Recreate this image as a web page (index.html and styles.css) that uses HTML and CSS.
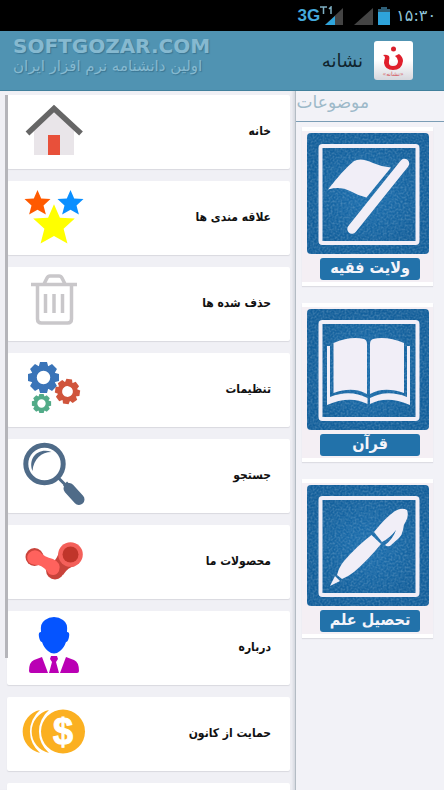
FILE: index.html
```html
<!DOCTYPE html>
<html lang="fa">
<head>
    <meta charset="UTF-8">
    <meta name="viewport" content="width=device-width, initial-scale=1.0">
    <title>نشانه</title>
    <link rel="stylesheet" href="styles.css">
</head>
<body>
    <div class="status-bar">
        <span class="network">3G</span>
        <svg class="signal" width="24" height="20" viewBox="0 0 24 20">
            <path d="M23 2v17H5z" fill="#444"/>
            <path d="M15 10v9H5z" fill="#2fa5dc"/>
            <path d="M0 1h7M3.500 1v7M9 3l2-2v7" fill="none" stroke="#7fb0c4" stroke-width="1.500"/>
        </svg>
        <svg class="signal-empty" width="19" height="20" viewBox="0 0 19 20">
            <path d="M19 2v17H0z" fill="#444"/>
        </svg>
        <svg class="battery" width="12" height="20" viewBox="0 0 12 20">
            <path d="M3 1h6v2h3v16H0V3h3z" fill="#2e5f77"/>
            <path d="M0 6h12v13H0z" fill="#2ea3da"/>
        </svg>
        <span class="clock">۱۵:۳۰</span>
    </div>

    <header class="header">
        <div class="watermark">
            <span class="watermark-name">SOFTGOZAR.COM</span>
            <span class="watermark-text" dir="rtl">اولین دانشنامه نرم افزار ایران</span>
        </div>
        <h1 class="app-title" dir="rtl">نشانه</h1>
        <svg class="app-logo" width="39" height="39" viewBox="0 0 39 39">
            <defs>
                <linearGradient id="logoBg" x1="0" y1="0" x2="0" y2="1">
                    <stop offset="0.500" stop-color="#fff"/>
                    <stop offset="1" stop-color="#d6d7dd"/>
                </linearGradient>
            </defs>
            <rect width="39" height="39" rx="3" fill="url(#logoBg)"/>
            <circle cx="19.500" cy="8" r="2.500" fill="#d91f2b"/>
            <path d="M9 14q3-1 6 1 1 2 0 5-1 5 4 5 5 0 5-5 0-3-3-5l4-2q4 3 4 7-1 9-10 9-8 0-9-7 0-3 1-5 0-2-2-3z" fill="#e01f2c"/>
            <text class="logo-text" x="19" y="35" text-anchor="middle">«نشانه»</text>
        </svg>
    </header>

    <div class="content">
        <nav class="drawer">
            <a href="#" class="menu-item">
                <svg class="menu-icon" viewBox="0 0 70 74">
                    <path d="M14 34L34 16l20 18v27H14z" fill="#e9e5e9"/>
                    <path d="M28 41h12v20H28z" fill="#e8503a"/>
                    <path d="M7.500 39.500L34 14.500l27 25" fill="none" stroke="#666" stroke-width="5.500"/>
                </svg>
                <span dir="rtl">خانه</span>
            </a>
            <a href="#" class="menu-item">
                <svg class="menu-icon" viewBox="0 0 70 74">
                    <defs>
                        <path id="star" d="M0-13L3.700-4.600 13-4 6 2.400 8.400 11.500 0 6.800-8.400 11.500-6 2.400-13-4-3.700-4.600z"/>
                    </defs>
                    <use href="#star" x="17.500" y="23" fill="#ff5a00"/>
                    <use href="#star" x="50.500" y="23" fill="#0a8fff"/>
                    <use href="#star" transform="translate(34 45) scale(1.600)" fill="#ff0"/>
                </svg>
                <span dir="rtl">علاقه مندی ها</span>
            </a>
            <a href="#" class="menu-item">
                <svg class="menu-icon" viewBox="0 0 70 74">
                    <g fill="none" stroke="#c9c7ca" stroke-width="3.500">
                        <path d="M11 18.500h46M24 18l3-6q1-2 3-2h9q2 0 3 2l3 6M17.500 19v34q0 4 4 4h26q4 0 4-4V19"/>
                        <path d="M25.500 28v19M34 28v19M42.500 28v19"/>
                    </g>
                </svg>
                <span dir="rtl">حذف شده ها</span>
            </a>
            <a href="#" class="menu-item">
                <svg class="menu-icon" viewBox="0 0 70 74">
                    <defs>
                        <path id="tooth" d="M-5-10l1.500-5.500h7L5-10z"/>
                        <g id="gear">
                            <circle r="9.500" fill="none" stroke-width="5.500"/>
                            <g stroke="none">
                                <use href="#tooth"/>
                                <use href="#tooth" transform="rotate(45)"/>
                                <use href="#tooth" transform="rotate(90)"/>
                                <use href="#tooth" transform="rotate(135)"/>
                                <use href="#tooth" transform="rotate(180)"/>
                                <use href="#tooth" transform="rotate(225)"/>
                                <use href="#tooth" transform="rotate(270)"/>
                                <use href="#tooth" transform="rotate(315)"/>
                            </g>
                        </g>
                    </defs>
                    <use href="#gear" transform="translate(23.500 25.500)" stroke="#3a74b8" fill="#3a74b8"/>
                    <use href="#gear" transform="translate(47.500 39.500) rotate(8) scale(0.800)" stroke="#d0553c" fill="#d0553c"/>
                    <use href="#gear" transform="translate(21.500 51.500) scale(0.620)" stroke="#52ab88" fill="#52ab88"/>
                </svg>
                <span dir="rtl">تنظیمات</span>
            </a>
            <a href="#" class="menu-item">
                <svg class="menu-icon" viewBox="0 0 70 74">
                    <g fill="none" stroke="#4f6b88">
                        <circle cx="24.500" cy="26" r="18.700" stroke-width="5"/>
                        <path d="M38 39.500l7 7" stroke-width="3"/>
                        <path d="M49 50.500l10 11" stroke-width="11" stroke-linecap="round"/>
                        <path d="M44.500 49l4-4" stroke-width="4"/>
                    </g>
                    <path d="M12.500 33c-5-13 6-24 19-19-10 0-18 7-19 19z" fill="#4f6b88"/>
                </svg>
                <span dir="rtl">جستجو</span>
            </a>
            <a href="#" class="menu-item">
                <svg class="menu-icon" viewBox="0 0 70 74">
                    <circle cx="14.500" cy="33" r="9" fill="#c9433b"/>
                    <circle cx="35" cy="46.500" r="9" fill="#c9433b"/>
                    <path d="M33 38q4-3 6-10l16 14q-7 1-12 9z" fill="#c9433b"/>
                    <circle cx="50.500" cy="30.500" r="12.300" fill="#f4605a"/>
                    <circle cx="50.500" cy="30.500" r="8" fill="#c0352a"/>
                    <path d="M9 29q5-5 11-1 4 5 13 7 9 4 6 12-3 6-10 3-4-7-11-9-8 0-10-4-2-5 1-8z" fill="#ff625d"/>
                </svg>
                <span dir="rtl">محصولات ما</span>
            </a>
            <a href="#" class="menu-item">
                <svg class="menu-icon" viewBox="0 0 70 74">
                    <path d="M21 22q-1-9 4-12 4-3 9-3 5 0 9 3 5 3 4 12 3 0 2 5-1 5-3 5-2 6-6 9-6 5-12 0-4-3-6-9-2 0-3-5-1-5 2-5z" fill="#0554ff"/>
                    <path d="M22 47l6 16H11q-2 0-2-2 0-9 5-11zM46 47l-6 16h17q2 0 2-2 0-9-5-11zM31 46h6l1 3-2 3 3 11h-10l3-11-2-3z" fill="#ba00b4"/>
                </svg>
                <span dir="rtl">درباره</span>
            </a>
            <a href="#" class="menu-item">
                <svg class="menu-icon" viewBox="0 0 70 74">
                    <g fill="#fbb021">
                        <path d="M20 14A22 22 0 0 0 20 57 28 28 0 0 1 20 14z"/>
                        <path d="M29 14A22 22 0 0 0 29 57 28 28 0 0 1 29 14z"/>
                        <circle cx="43" cy="35.500" r="22"/>
                    </g>
                    <text class="coin-sign" x="43" y="48" text-anchor="middle">$</text>
                </svg>
                <span dir="rtl">حمایت از کانون</span>
            </a>
            <a href="#" class="menu-item"></a>
            <div class="scrollbar"></div>
        </nav>

        <main class="topics">
            <h2 class="topics-title" dir="rtl">موضوعات</h2>

            <a href="#" class="tile">
                <svg class="tile-picture" viewBox="0 0 122 121">
                    <defs>
                        <filter id="denim" x="0" y="0" width="1" height="1" color-interpolation-filters="sRGB">
                            <feTurbulence type="fractalNoise" baseFrequency="0.500" numOctaves="2"/>
                            <feColorMatrix values="0 0 0 0 1  0 0 0 0 1  0 0 0 0 1  0.400 0 0 0 -0.140"/>
                            <feComposite operator="in" in2="SourceGraphic"/>
                        </filter>
                        <radialGradient id="blue">
                            <stop offset="0.200" stop-color="#1a6cab"/>
                            <stop offset="1" stop-color="#135f9b"/>
                        </radialGradient>
                        <g id="frame">
                            <rect width="122" height="121" rx="4" fill="url(#blue)"/>
                            <rect width="122" height="121" rx="4" filter="url(#denim)"/>
                            <rect x="13.500" y="13" width="97" height="97" rx="2" fill="none" stroke="#f1eef7" stroke-width="4"/>
                        </g>
                    </defs>
                    <use href="#frame"/>
                    <path d="M21 56.500Q36 37 47 28 54 24 66 30 75 34 84 34.500L59.500 64.500Q50 62 43 58 34 53 21 56.500z" fill="#f1eef7"/>
                    <path d="M97.500 30.500L45 96" stroke="#f1eef7" stroke-width="9.500" stroke-linecap="round"/>
                </svg>
                <span class="tile-label" dir="rtl">ولایت فقیه</span>
            </a>

            <a href="#" class="tile">
                <svg class="tile-picture" viewBox="0 0 122 121">
                    <use href="#frame"/>
                    <g fill="#f1eef7">
                        <path d="M26.500 34Q43 27 57 30q3 1 3 5v50Q46 77 26.500 84z"/>
                        <path d="M97 34Q80 27 66 30q-3 1-3 5v50Q77 77 97 84z"/>
                        <path d="M20 37h3v51Q43 80 60.500 89v6Q43 86 20 96z"/>
                        <path d="M103 37h-3v51Q80 80 63 89v6Q80 86 103 96z"/>
                    </g>
                </svg>
                <span class="tile-label" dir="rtl">قرآن</span>
            </a>

            <a href="#" class="tile">
                <svg class="tile-picture" viewBox="0 0 122 121">
                    <use href="#frame"/>
                    <g fill="#f1eef7">
                        <path d="M23 101l5-10 5 5z"/>
                        <path d="M30 90Q32 82 37 76 50 61 64.500 50l9.500 9Q61 75 47 87q-5 4-12 7z"/>
                        <path d="M67 47Q78 33 88 26q7-4 12-1 2 5-1 11-3 4-3 9-1 5-4 8l-9 8q-3 1-5-1 8-6 11-15-6 8-14 12z"/>
                    </g>
                </svg>
                <span class="tile-label" dir="rtl">تحصیل علم</span>
            </a>
        </main>
    </div>
</body>
</html>
```
FILE: styles.css
```css
* {
    box-sizing: border-box;
}
body {
    margin: 0;
    height: 100vh;
    display: flex;
    flex-direction: column;
    overflow: hidden;
    font-family: "DejaVu Sans", sans-serif;
    background-color: #f2f2f7;
}
a {
    color: inherit;
    text-decoration: none;
}

/* Status bar */
.status-bar {
    flex: none;
    height: 31px;
    padding-right: 8px;
    display: flex;
    align-items: center;
    justify-content: flex-end;
    background-color: #000;
}
.network {
    font: bold 17px "Liberation Sans", sans-serif;
    color: #45a9dc;
}
.signal-empty {
    margin-left: 10px;
}
.battery {
    margin-left: 5px;
}
.clock {
    margin-left: 6px;
    font-size: 16px;
    color: #8fc4d8;
}

/* Header */
.header {
    flex: none;
    height: 60px;
    padding: 0 31px 0 13px;
    display: flex;
    align-items: center;
    background-color: #5093b2;
    border-bottom: 1px solid #41809c;
}
.watermark {
    flex: 1;
    display: flex;
    flex-direction: column;
    align-items: flex-start;
    padding-bottom: 10px;
    color: #86b9d0;
    white-space: nowrap;
    text-shadow: 1px 1px 1px #3b7693;
}
.watermark-name {
    font-size: 20px;
    font-weight: bold;
    line-height: 20px;
}
.watermark-text {
    font-size: 15px;
    line-height: 20px;
}
.app-title {
    margin: 0 11px 0 0;
    font-size: 18px;
    font-weight: normal;
    color: #10242e;
}
.logo-text {
    font-size: 6px;
    fill: #d4545c;
}

/* Drawer */
.content {
    flex: 1;
    min-height: 0;
    display: flex;
}
.drawer {
    position: relative;
    flex: 1;
    padding: 4px 5px 0 7px;
    display: flex;
    flex-direction: column;
    gap: 12px;
    overflow: hidden;
    background-color: #f0f0f5;
    border-right: 1px solid #b4bcc4;
    box-shadow: inset -4px 0 3px -2px #d5d8df;
}
.menu-item {
    flex: none;
    height: 74px;
    padding: 0 19px 2px 13px;
    display: flex;
    align-items: center;
    justify-content: space-between;
    background-color: #fff;
    border-radius: 2px;
    box-shadow: 0 1px 1px #d9d9df;
    font-family: "DejaVu Sans Condensed", "DejaVu Sans", sans-serif;
    font-size: 12px;
    font-weight: bold;
    color: #111;
}
.menu-icon {
    width: 70px;
    height: 74px;
}
.coin-sign {
    font: bold 36px "Liberation Sans", sans-serif;
    fill: #fff;
    stroke: #fff;
}
.scrollbar {
    position: absolute;
    left: 5px;
    top: 4px;
    width: 3px;
    height: 563px;
    background-color: #b5b5ba;
}

/* Topics */
.topics {
    flex: none;
    width: 148px;
    overflow: hidden;
}
.topics-title {
    margin: 0 0 5px;
    height: 31px;
    padding-right: 75px;
    border-bottom: 1px solid #7b9db5;
    font-size: 17px;
    font-weight: normal;
    line-height: 22px;
    white-space: nowrap;
    color: #9db9c9;
}
.tile {
    margin: 0 11px 17px 6px;
    padding: 2px 4px;
    display: flex;
    flex-direction: column;
    align-items: center;
    gap: 4px;
    background-color: #f4eff4;
    border-top: 4px solid #fff;
    border-bottom: 4px solid #fff;
    box-shadow: 0 1px 1px #dddde3;
}
.tile-picture {
    width: 122px;
    height: 121px;
}
.tile-label {
    align-self: flex-end;
    width: 100px;
    height: 22px;
    margin-right: 9px;
    border-radius: 3px;
    background-color: #2272aa;
    color: #f4f4fa;
    font-family: "DejaVu Sans Condensed", "DejaVu Sans", sans-serif;
    font-size: 16px;
    font-weight: bold;
    line-height: 20px;
    text-align: center;
}
```
